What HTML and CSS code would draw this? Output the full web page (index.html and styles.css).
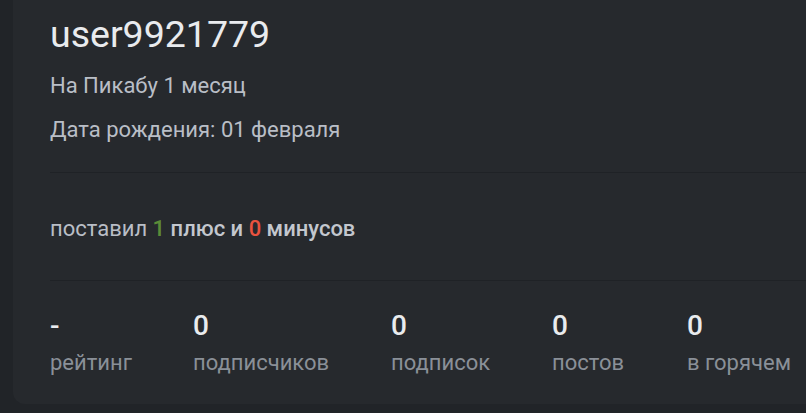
FILE: index.html
```html
<!DOCTYPE html>
<html lang="ru">
<head>
<meta charset="utf-8">
<link rel="stylesheet" href="styles.css">
</head>
<body>
<div class="card">
  <div class="head">
    <h1 class="name">user9921779</h1>
    <div class="meta">На Пикабу 1 месяц</div>
    <div class="meta">Дата рождения: 01 февраля</div>
  </div>
  <div class="votes">поставил <span class="plus">1</span> <b>плюс и</b> <span class="minus">0</span> <b>минусов</b></div>
  <div class="stats">
    <div class="stat s1"><div class="num">-</div><div class="label">рейтинг</div></div>
    <div class="stat s2"><div class="num">0</div><div class="label">подписчиков</div></div>
    <div class="stat s3"><div class="num">0</div><div class="label">подписок</div></div>
    <div class="stat s4"><div class="num">0</div><div class="label">постов</div></div>
    <div class="stat s5"><div class="num">0</div><div class="label">в горячем</div></div>
  </div>
</div>
</body>
</html>
```

FILE: styles.css
```css
html, body {
  margin: 0;
  padding: 0;
  background: #212428;
  font-family: Roboto, "Noto Sans", sans-serif;
  overflow: hidden;
}

.card {
  margin-left: 13px;
  height: 404px;
  background: #26292d;
  border-radius: 0 0 0 12px;
  padding-left: 37px;
  box-sizing: border-box;
}

.head {
  padding-top: 12px;
  padding-bottom: 29px;
  border-bottom: 1px solid #1f2226;
}

.name {
  margin: 0;
  font-size: 37.5px;
  font-weight: 400;
  line-height: 44px;
  color: #e9ebee;
}

.meta {
  font-size: 22px;
  line-height: 26px;
  color: #b9bec6;
  margin-top: 17px;
}

.meta + .meta {
  margin-top: 18px;
}

.votes {
  padding: 43px 0 38px;
  font-size: 22px;
  line-height: 26px;
  color: #b9bec6;
  border-bottom: 1px solid #1f2226;
}

.votes b {
  font-weight: 500;
  color: #c3c7ce;
}

.plus {
  color: #5b8c38;
  font-weight: 500;
}

.minus {
  color: #e9533f;
  font-weight: 500;
}

.stats {
  display: flex;
  padding-top: 29px;
}

.stat .num {
  font-size: 28px;
  font-weight: 500;
  line-height: 32px;
  color: #e9ebee;
}

.stat .label {
  font-size: 22px;
  line-height: 26px;
  margin-top: 8px;
  color: #8a9098;
}

.s1 { width: 143px; }
.s2 { width: 198px; }
.s3 { width: 161px; }
.s4 { width: 135px; }
```
